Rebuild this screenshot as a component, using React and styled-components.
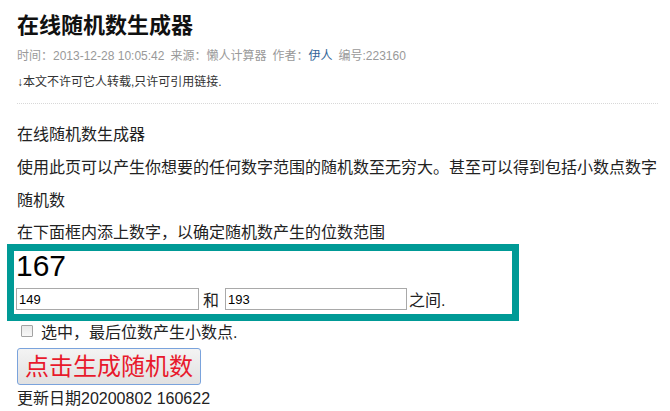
import React, { useState } from 'react';
import styled, { createGlobalStyle } from 'styled-components';

// 在线随机数生成器 页面

const GlobalStyle = createGlobalStyle`
  body {
    margin: 0;
    background: #fff;
    font-family: "Liberation Sans", "Noto Sans CJK SC", sans-serif;
    color: #222;
  }
`;

const Page = styled.div`
  width: 641px;
  padding-left: 17px;
`;

const Title = styled.h1`
  margin: 11px 0 0;
  font-size: 22px;
  line-height: 30px;
  font-weight: bold;
  color: #111;
`;

const Meta = styled.div`
  margin-top: 5px;
  font-size: 12px;
  line-height: 20px;
  color: #999;
`;

const MetaItem = styled.span`
  margin-right: 6px;
`;

const AuthorLink = styled.a`
  color: #369;
  text-decoration: none;
`;

const Notice = styled.div`
  margin-top: 6px;
  font-size: 12px;
  line-height: 20px;
  color: #333;
`;

const Divider = styled.div`
  margin-top: 11px;
  border-top: 1px dotted #d8d8d8;
`;

const Intro = styled.div`
  margin-top: 14px;
  font-size: 16px;
`;

const Para = styled.p`
  margin: 0;
  line-height: 33px;
`;

const Prompt = styled.p`
  margin: 5px 0 0;
  line-height: 22px;
`;

const RangeBox = styled.div`
  box-sizing: border-box;
  width: 512px;
  margin-left: -10px;
  border: 7px solid #009a96;
  padding: 0 2px 3px;
`;

const Result = styled.div`
  font-size: 30px;
  line-height: 30px;
  color: #000;
`;

const RangeRow = styled.div`
  display: flex;
  align-items: center;
  margin-top: 6px;
  font-size: 16px;
`;

const NumInput = styled.input`
  box-sizing: border-box;
  width: ${p => p.$w}px;
  height: 22px;
  margin: 0;
  padding: 1px 2px 0;
  border: 1px solid #a9a9a9;
  font-family: "Liberation Sans", sans-serif;
  font-size: 13px;
  color: #000;
  outline: none;
`;

const Joiner = styled.span`
  margin: 0 6px 0 4px;
`;

const Tail = styled.span`
  margin-left: 2px;
`;

const OptionRow = styled.label`
  display: flex;
  align-items: center;
  height: 20px;
  font-size: 16px;
`;

const Check = styled.input`
  appearance: none;
  box-sizing: border-box;
  width: 12px;
  height: 12px;
  margin: 0 8px 0 4px;
  border: 1px solid #a3a3a3;
  border-radius: 1px;
  background: linear-gradient(#e8e8e8, #f8f8f8);
`;

const GenerateButton = styled.button`
  box-sizing: border-box;
  width: 184px;
  height: 37px;
  margin-top: 7px;
  padding: 0;
  border: 1px solid #7aa3dc;
  border-radius: 3px;
  background: linear-gradient(#f3f3f3, #e1e1e1);
  color: #e8192c;
  font-family: "Liberation Sans", "Noto Sans CJK SC", sans-serif;
  font-size: 24px;
  line-height: 35px;
  cursor: pointer;
`;

const Updated = styled.div`
  font-size: 16px;
  line-height: 22px;
  margin-top: 3px;
`;

export default function App() {
  const [low, setLow] = useState('149');
  const [high, setHigh] = useState('193');
  const [decimal, setDecimal] = useState(false);
  const [value, setValue] = useState('167');

  const generate = () => {
    const a = parseFloat(low);
    const b = parseFloat(high);
    if (isNaN(a) || isNaN(b)) return;
    const min = Math.min(a, b);
    const max = Math.max(a, b);
    const r = min + Math.random() * (max - min);
    setValue(decimal ? r.toFixed(2) : String(Math.round(r)));
  };

  return (
    <>
      <GlobalStyle />
      <Page>
        <Title>在线随机数生成器</Title>
        <Meta>
          <MetaItem>时间：2013-12-28 10:05:42</MetaItem>
          <MetaItem>来源：懒人计算器</MetaItem>
          <MetaItem>
            作者：<AuthorLink href="#">伊人</AuthorLink>
          </MetaItem>
          <span>编号:223160</span>
        </Meta>
        <Notice>↓本文不许可它人转载,只许可引用链接.</Notice>
        <Divider />
        <Intro>
          <Para>在线随机数生成器</Para>
          <Para>使用此页可以产生你想要的任何数字范围的随机数至无穷大。甚至可以得到包括小数点数字随机数</Para>
          <Prompt>在下面框内添上数字，以确定随机数产生的位数范围</Prompt>
        </Intro>
        <RangeBox>
          <Result>{value}</Result>
          <RangeRow>
            <NumInput $w={183} value={low} onChange={e => setLow(e.target.value)} />
            <Joiner>和</Joiner>
            <NumInput $w={182} value={high} onChange={e => setHigh(e.target.value)} />
            <Tail>之间.</Tail>
          </RangeRow>
        </RangeBox>
        <OptionRow>
          <Check type="checkbox" checked={decimal} onChange={e => setDecimal(e.target.checked)} />
          选中，最后位数产生小数点.
        </OptionRow>
        <GenerateButton onClick={generate}>点击生成随机数</GenerateButton>
        <Updated>更新日期20200802 160622</Updated>
      </Page>
    </>
  );
}
